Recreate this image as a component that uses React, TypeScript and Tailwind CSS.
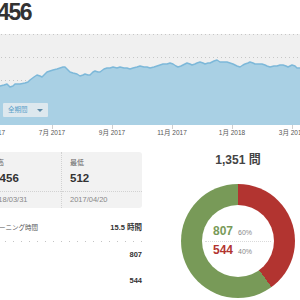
import React from 'react';

// rating history, page coords (x, y from chart top)
const history: [number, number][] = [
  [-19, 53], [-12, 52], [-6, 53], [0, 52], [4, 51], [7, 50], [10, 53], [13, 52], [15, 50],
  [20, 50], [25, 49], [28, 48], [30, 46], [34, 43], [37, 41], [40, 42], [42, 43], [45, 40],
  [47, 38], [50, 37], [53, 36], [57, 35], [60, 34], [63, 33], [65, 33], [67, 35], [70, 38],
  [73, 39], [77, 40], [80, 42], [83, 41], [85, 40], [88, 41], [90, 41], [93, 38], [95, 37],
  [98, 38], [100, 38], [104, 35], [107, 34], [110, 34], [113, 33], [117, 34], [120, 33],
  [124, 34], [127, 34], [130, 35], [133, 34], [137, 33], [140, 32], [144, 33], [147, 33],
  [150, 34], [154, 33], [157, 32], [160, 31], [163, 30], [167, 30], [170, 29], [173, 30],
  [176, 32], [178, 33], [181, 32], [183, 31], [187, 29], [190, 30], [192, 31], [195, 30],
  [197, 29], [200, 28], [203, 29], [205, 30], [208, 29], [210, 29], [214, 27], [217, 26],
  [220, 28], [224, 28], [227, 28], [230, 29], [233, 30], [237, 32], [240, 33], [243, 31],
  [245, 30], [248, 29], [250, 28], [253, 29], [255, 30], [259, 30], [262, 30], [265, 31],
  [267, 32], [270, 33], [274, 32], [277, 32], [280, 31], [283, 31], [286, 32], [288, 33],
  [292, 31], [295, 32], [297, 34], [300, 34],
];

const months = ['5月 2017', '7月 2017', '9月 2017', '11月 2017', '1月 2018', '3月 2018'];
const ticks = [-8, 52, 112, 172, 232, 292];

function RatingChart() {
  const line = history.map(([x, y]) => `${x},${y}`).join(' ');
  const area = `M-19,91 L${line.replace(/ /g, ' L')} L300,91 Z`;
  return (
    <svg width={319} height={95} viewBox="-19 0 319 95" className="block">
      <rect x={-19} y={0} width={319} height={91} fill="#f0f0f0" />
      {[0.5, 23.5, 46.5, 69.5].map((y) => (
        <line key={y} x1={-19} x2={300} y1={y} y2={y} stroke="#c6c6c6" strokeDasharray="1 3" />
      ))}
      <path d={area} fill="#a9d0e4" />
      <polyline points={line} fill="none" stroke="#7db8d9" strokeWidth={1.5} strokeLinejoin="round" />
      {ticks.map((x) => (
        <line key={x} x1={x + 0.5} x2={x + 0.5} y1={91} y2={95} stroke="#cfcfcf" />
      ))}
    </svg>
  );
}

function Stat({ label, value, date, first }: { label: string; value: string; date: string; first?: boolean }) {
  return (
    <div className={first ? 'w-[81px] border-r border-dotted border-[#d2d2d2]' : 'w-[80px]'}>
      <div className={`pt-[6px] pb-[6px] border-b border-dotted border-[#d2d2d2] ${first ? 'pl-[9px]' : 'pl-[8px]'}`}>
        <div className="text-[7px] leading-[10px] text-[#666]">{label}</div>
        <div className="mt-[3px] text-[11.5px] leading-[14px] font-bold text-[#333]">{value}</div>
      </div>
      <div className={`text-[7.5px] leading-[16px] text-[#888] ${first ? 'pl-[9px]' : 'pl-[8px]'}`}>{date}</div>
    </div>
  );
}

function Row({ label, value, sep }: { label: string; value: string; sep?: boolean }) {
  return (
    <>
      <div className="h-[26px] flex items-center justify-between pl-[5px]">
        <span className="text-[6.5px] text-[#555]">{label}</span>
        <span className="text-[7.5px] font-bold text-[#333]">{value}</span>
      </div>
      {sep && <div className="h-px bg-[linear-gradient(to_right,#c4c4c4_1px,transparent_1px)] bg-[length:8px_1px]" />}
    </>
  );
}

export default function App() {
  return (
    <div className="w-[300px] h-[300px] overflow-hidden bg-white font-['Liberation_Sans','Noto_Sans_CJK_JP',sans-serif] text-[#333]">
      <div className="ml-[-19px] w-[319px]">
        <div className="text-[23px] font-bold leading-[24px] tracking-[-1.5px] text-[#333]">1,456</div>

        <div className="relative mt-[10px]">
          <RatingChart />
          <div className="absolute left-[22px] top-[69px] w-[45px] h-[14px] bg-[#dde8ee] rounded-[1px] flex items-center justify-between pl-[5px] pr-[5px]">
            <span className="text-[6.5px] text-[#5a9ec8]">全期間</span>
            <span className="w-0 h-0 border-x-[3px] border-x-transparent border-t-[3px] border-t-[#5d89a6]" />
          </div>
        </div>

        <div className="flex ml-[-19px] text-[6.5px] leading-[8px] text-[#555]">
          {months.map((m) => (
            <div key={m} className="w-[60px] shrink-0 text-center">{m}</div>
          ))}
        </div>

        <div className="flex mt-[15px]">
          <div className="w-[161px] shrink-0">
            <div className="flex bg-[#f2f2f2] rounded-[3px]">
              <Stat label="最高" value="1,456" date="2018/03/31" first />
              <Stat label="最低" value="512" date="2017/04/20" />
            </div>
            <div className="mt-[7px]">
              <Row label="トレーニング時間" value="15.5 時間" sep />
              <Row label="正解" value="807" />
              <Row label="誤答" value="544" />
            </div>
          </div>

          <div className="ml-[34px] w-[124px] shrink-0 flex flex-col items-center">
            <div className="text-[12px] leading-[16px] font-bold text-[#444]">1,351 問</div>
            <div className="mt-[16px] w-[114px] h-[114px] rounded-full bg-[conic-gradient(#b23430_0%_40%,#789a58_40%_100%)] flex items-center justify-center">
              <div className="w-[72px] h-[72px] rounded-full bg-white flex flex-col items-center justify-center">
                <div className="w-[50px] flex items-baseline gap-[5px] leading-[14px]">
                  <span className="text-[12px] font-bold text-[#789a58]">807</span>
                  <span className="text-[7px] text-[#888]">60%</span>
                </div>
                <div className="w-[66px] my-[1px] border-t border-dotted border-[#dadada]" />
                <div className="w-[50px] flex items-baseline gap-[5px] leading-[14px]">
                  <span className="text-[12px] font-bold text-[#b23430]">544</span>
                  <span className="text-[7px] text-[#888]">40%</span>
                </div>
              </div>
            </div>
          </div>
        </div>
      </div>
    </div>
  );
}
